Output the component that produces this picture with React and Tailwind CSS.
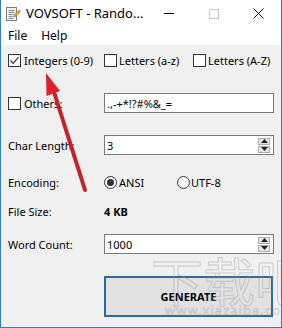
import React from "react";

const font = { fontFamily: '"Noto Sans", "Open Sans", sans-serif' };

const CheckBox = ({ checked }) => (
  <span className="w-[13px] h-[13px] border border-[#333] bg-white flex items-center justify-center shrink-0">
    {checked && (
      <svg width="11" height="11" viewBox="0 0 11 11">
        <path d="M1.5 5.5 L4.3 8.3 L9.5 2.2" fill="none" stroke="#333" strokeWidth="1.2" />
      </svg>
    )}
  </span>
);

const Radio = ({ checked }) => (
  <span className="w-[13px] h-[13px] rounded-full border border-[#333] bg-white flex items-center justify-center shrink-0">
    {checked && <span className="w-[7px] h-[7px] rounded-full bg-[#333]" />}
  </span>
);

const Spinner = () => (
  <div className="flex flex-col gap-[1px] mr-[3px]">
    <span className="w-[12px] h-[7px] bg-[#e6e6e6] border border-[#adadad] flex items-center justify-center">
      <svg width="7" height="4" viewBox="0 0 7 4"><path d="M0 4 L3.5 0 L7 4 Z" fill="#222" /></svg>
    </span>
    <span className="w-[12px] h-[7px] bg-[#e6e6e6] border border-[#adadad] flex items-center justify-center">
      <svg width="7" height="4" viewBox="0 0 7 4"><path d="M0 0 L3.5 4 L7 0 Z" fill="#222" /></svg>
    </span>
  </div>
);

const Field = ({ value, spin }) => (
  <div className="w-[170px] h-[20px] bg-white border border-[#7a7a7a] flex items-center pl-[2px]">
    <span className="flex-1">{value}</span>
    {spin && <Spinner />}
  </div>
);

export default function App() {
  return (
    <div
      className="relative w-[282px] h-[328px] overflow-hidden border-x border-b border-[#2f7cc0] bg-[#f0f0f0] flex flex-col text-black"
      style={font}
    >
      {/* Title bar */}
      <div className="h-[27px] bg-white flex items-center">
        <svg className="ml-[4px] shrink-0" width="16" height="16" viewBox="0 0 16 16">
          <rect x="1.5" y="1.5" width="10" height="13" fill="#f4f4f4" stroke="#7d7d7d" />
          <path d="M3.5 4.5h6M3.5 6.5h6M3.5 8.5h5M3.5 10.5h4M3.5 12.5h5" stroke="#8c8c8c" strokeWidth="1" />
          <path d="M9 9 L14 4 L15.5 5.5 L10.5 10.5 L8.5 11 Z" fill="#e9a23b" stroke="#b5701c" strokeWidth="0.6" />
        </svg>
        <span className="ml-[5px] text-[13px] leading-none whitespace-nowrap">VOVSOFT - Rando...</span>
        <div className="ml-auto flex items-center h-full shrink-0">
          <span className="w-[45px] h-full flex items-center justify-center">
            <span className="w-[10px] h-[1px] bg-black" />
          </span>
          <span className="w-[45px] h-full flex items-center justify-center">
            <span className="w-[10px] h-[10px] border border-[#c8c8c8]" />
          </span>
          <span className="w-[45px] h-full flex items-center justify-center">
            <svg width="11" height="11" viewBox="0 0 11 11">
              <path d="M0.5 0.5 L10.5 10.5 M10.5 0.5 L0.5 10.5" stroke="#111" strokeWidth="1" />
            </svg>
          </span>
        </div>
      </div>

      {/* Menu bar */}
      <div className="h-[18px] bg-white flex items-center text-[12px] leading-none pl-[7px] gap-[14px]">
        <span>File</span>
        <span>Help</span>
      </div>

      {/* Client area */}
      <div className="flex-1 flex flex-col text-[11px] leading-none pl-[7px]">
        <div className="mt-[8px] h-[14px] flex items-center">
          <div className="w-[96px] flex items-center gap-[3px]">
            <CheckBox checked />
            <span>Integers (0-9)</span>
          </div>
          <div className="w-[89px] flex items-center gap-[2px]">
            <CheckBox />
            <span>Letters (a-z)</span>
          </div>
          <div className="flex items-center gap-[2px]">
            <CheckBox />
            <span>Letters (A-Z)</span>
          </div>
        </div>

        <div className="mt-[26px] h-[20px] flex items-center">
          <div className="w-[96px] flex items-center gap-[3px]">
            <CheckBox />
            <span>Others:</span>
          </div>
          <Field value=".,-+*!?#%&_=" />
        </div>

        <div className="mt-[22px] h-[20px] flex items-center">
          <span className="w-[96px]">Char Length:</span>
          <Field value="3" spin />
        </div>

        <div className="mt-[17px] h-[20px] flex items-center">
          <span className="w-[96px]">Encoding:</span>
          <div className="w-[73px] flex items-center gap-[2px]">
            <Radio checked />
            <span>ANSI</span>
          </div>
          <div className="flex items-center gap-[1px]">
            <Radio />
            <span>UTF-8</span>
          </div>
        </div>

        <div className="mt-[9px] h-[20px] flex items-center">
          <span className="w-[96px]">File Size:</span>
          <span className="font-bold">4 KB</span>
        </div>

        <div className="mt-[13px] h-[20px] flex items-center">
          <span className="w-[96px]">Word Count:</span>
          <Field value="1000" spin />
        </div>

        <div className="mt-[22px] flex">
          <div className="ml-[96px] w-[169px] h-[41px] border-2 border-[#2b6aa3] bg-[#e1e1e1] flex items-center justify-center font-bold">
            GENERATE
          </div>
        </div>
      </div>

      {/* Watermark */}
      <div className="absolute left-[150px] top-[254px] flex flex-col pointer-events-none opacity-40">
        <span
          className="text-[52px] leading-none whitespace-nowrap text-transparent [-webkit-text-stroke:1px_#9a9a9a]"
          style={{ fontFamily: '"Noto Sans CJK SC", sans-serif' }}
        >
          下载吧
        </span>
        <span className="ml-[14px] -mt-[2px] text-[13px] leading-none whitespace-nowrap tracking-[1px] text-transparent [-webkit-text-stroke:0.6px_#9a9a9a]">
          www.xiazaiba.com
        </span>
      </div>

      {/* Red arrow annotation */}
      <svg className="absolute left-0 top-0 pointer-events-none" width="282" height="328" viewBox="0 0 282 328">
        <path d="M84 190 L53 92" stroke="#c4232b" strokeWidth="4" strokeLinecap="round" />
        <path d="M45 73 L59 91 L45.5 96 Z" fill="#e0202a" />
      </svg>
    </div>
  );
}
